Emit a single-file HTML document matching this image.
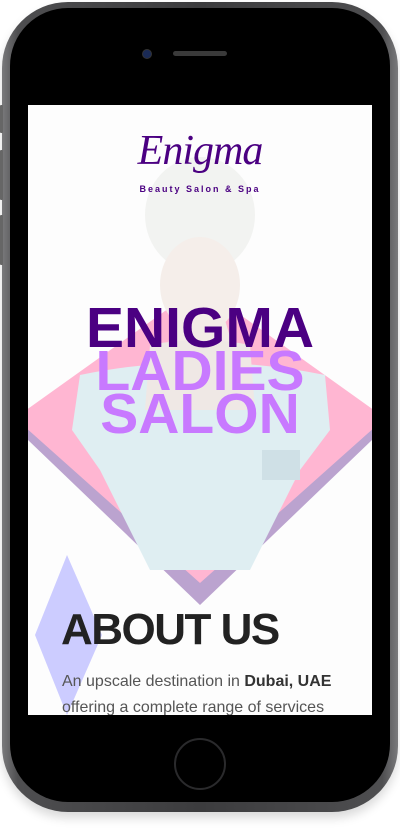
<!DOCTYPE html>
<html><head><meta charset="utf-8"><style>
html,body{margin:0;padding:0;background:#fff;width:400px;height:830px;overflow:hidden;position:relative;font-family:"Liberation Sans",sans-serif}
.phone{position:absolute;left:2px;top:2px;width:396px;height:810px;border-radius:66px;background:linear-gradient(90deg,#7a7a7c,#4e4e50 4%,#3c3c3e 50%,#4e4e50 96%,#7a7a7c);box-shadow:0 6px 10px rgba(0,0,0,.15)}
.face{position:absolute;left:10px;top:8px;width:380px;height:794px;border-radius:58px;background:#000}
.screen{position:absolute;left:28px;top:105px;width:344px;height:610px;background:#fdfdfd;overflow:hidden}
.cam{position:absolute;left:142px;top:49px;width:8px;height:8px;border-radius:50%;background:#1a2a55;border:1px solid #333}
.spk{position:absolute;left:173px;top:51px;width:54px;height:5px;border-radius:3px;background:#3a3a3a}
.home{position:absolute;left:174px;top:738px;width:48px;height:48px;border-radius:50%;border:2px solid #2a2a2c;background:#000}
.btn{position:absolute;left:0;width:3px;background:#666;border-radius:1px}
.t{position:absolute;left:0;width:344px;text-align:center;font-weight:bold;font-size:57px;line-height:43px;letter-spacing:0}
</style></head><body>
<div class="phone"></div>
<div class="btn" style="top:105px;height:28px"></div>
<div class="btn" style="top:150px;height:50px"></div>
<div class="btn" style="top:215px;height:50px"></div>
<div class="face"></div>
<div class="cam"></div><div class="spk"></div>
<div class="home"></div>
<div class="screen">
<svg width="344" height="610" style="position:absolute;left:0;top:0">
<g transform="translate(-28,-105)">
<polygon points="10,418 200,420 390,418 372,440 200,605 28,440 10,430" fill="#bba3cf"/>
<polygon points="200,286 385,418 200,583 15,418" fill="#ffb6d2"/>
<!-- woman -->
<ellipse cx="200" cy="215" rx="55" ry="58" fill="#f2f3f1"/>
<ellipse cx="200" cy="285" rx="40" ry="48" fill="#f5eeea"/>
<path d="M175,320 L225,320 L240,370 L160,370 Z" fill="#f3ebe7"/>
<path d="M80,375 Q200,350 325,375 L330,430 L300,470 L250,570 L150,570 L100,470 L72,430 Z" fill="#dfeef2"/>
<path d="M150,345 Q200,335 250,345 L255,410 L145,410 Z" fill="#efe8e5"/>
<rect x="262" y="450" width="38" height="30" fill="#cfe0e6"/>
<polygon points="67,555 102,635 67,715 35,635" fill="#ccccff"/>
</g>
</svg>
<div style="position:absolute;left:0;top:22px;width:344px;text-align:center;font-family:'Liberation Serif',serif;font-style:italic;font-size:42px;color:#4b0082;letter-spacing:-1px">Enigma</div>
<div style="position:absolute;left:0;top:79px;width:344px;text-align:center;font-size:9px;color:#4b0082;letter-spacing:2px;font-weight:bold">Beauty Salon &amp; Spa</div>
<div class="t" style="top:202px;color:#4b0082">ENIGMA</div>
<div class="t" style="top:245px;color:#c879ff">LADIES</div>
<div class="t" style="top:288px;color:#c879ff">SALON</div>
<div style="position:absolute;left:33px;top:500px;font-size:44px;font-weight:bold;color:#222;letter-spacing:-1.5px">ABOUT US</div>
<div style="position:absolute;left:34px;top:564px;width:310px;font-size:16px;line-height:26px;color:#555">An upscale destination in <b style="color:#333">Dubai, UAE</b> offering a complete range of services</div>
</div>
</body></html>
